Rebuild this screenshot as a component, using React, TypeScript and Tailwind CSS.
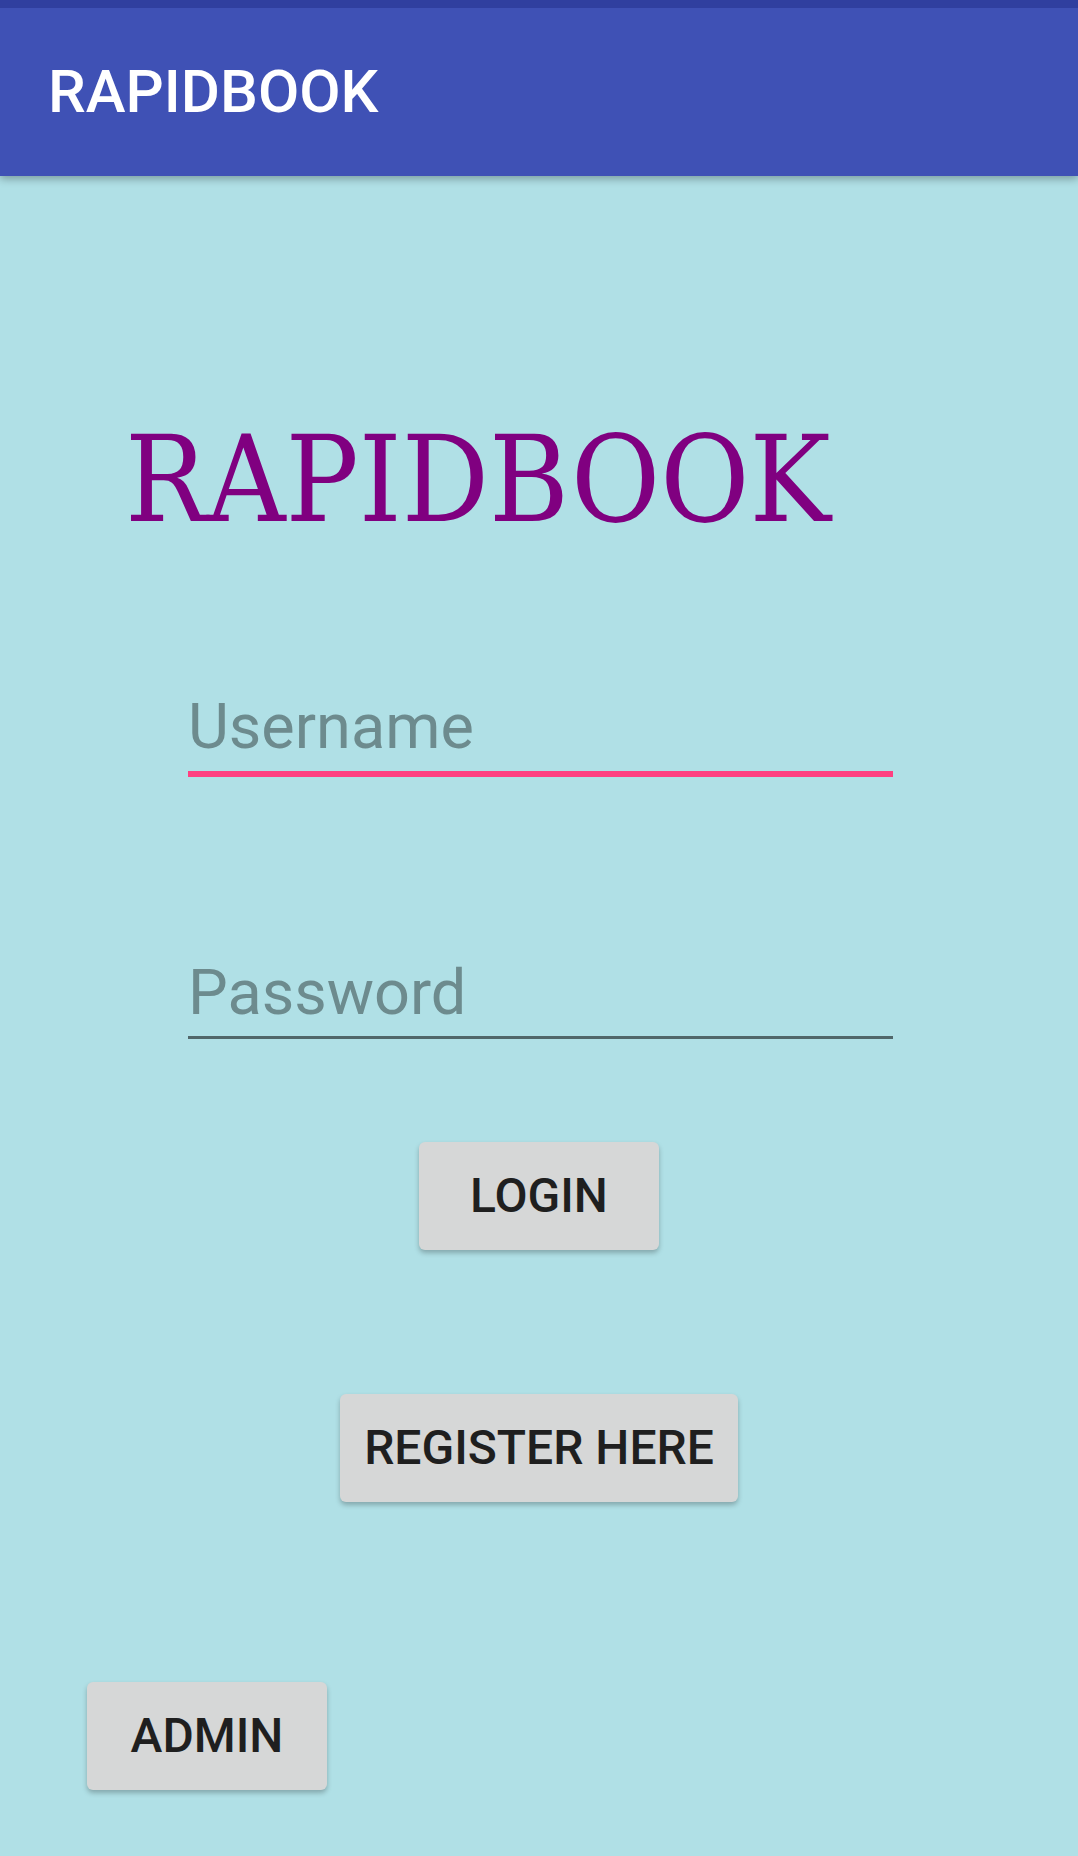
import { useState } from "react";

export default function App() {
  const [username, setUsername] = useState("");
  const [password, setPassword] = useState("");

  return (
    <div className="min-h-[1856px] w-full bg-[#b0e0e6] flex flex-col font-['Roboto',sans-serif]">
      {/* barra de estado + toolbar */}
      <div className="relative z-10 shadow-[0_3px_8px_rgba(0,0,0,0.3)]">
        <div className="h-[8px] bg-[#303f9f]" />
        <div className="h-[168px] bg-[#3f51b5] flex items-center pl-[48px]">
          <span className="text-white text-[60px] font-medium leading-none">RAPIDBOOK</span>
        </div>
      </div>

      {/* Titulo grande */}
      <div className="mt-[244px] pl-[125px]">
        <h1 className="inline-block origin-left scale-x-[0.907] font-['DejaVu_Serif',serif] text-[120px] leading-[120px] text-[#800080] font-normal whitespace-nowrap">
          RAPIDBOOK
        </h1>
      </div>

      {/* Campos */}
      <div className="mt-[155px] pl-[188px] flex flex-col">
        <input
          type="text"
          value={username}
          onChange={(e) => setUsername(e.target.value)}
          placeholder="Username"
          className="w-[705px] h-[82px] pb-[13px] bg-transparent border-b-[6px] border-[#ff4081] outline-none text-[63px] leading-[63px] text-[#212121] placeholder:text-[#6d8b8e]"
        />
        <input
          type="password"
          value={password}
          onChange={(e) => setPassword(e.target.value)}
          placeholder="Password"
          className="mt-[184px] w-[705px] h-[78px] pb-[12px] bg-transparent border-b-[3px] border-[#51676a] outline-none text-[63px] leading-[63px] text-[#212121] placeholder:text-[#6d8b8e]"
        />
      </div>

      {/* Botones */}
      <div className="mt-[103px] flex flex-col items-center">
        <button className="min-w-[240px] h-[108px] px-[24px] rounded-[6px] bg-[#d6d7d7] text-[#1f1f1f] text-[48px] font-medium shadow-[0_3px_5px_rgba(0,0,0,0.25)]">
          LOGIN
        </button>
        <button className="mt-[144px] min-w-[240px] h-[108px] px-[24px] rounded-[6px] bg-[#d6d7d7] text-[#1f1f1f] text-[48px] font-medium shadow-[0_3px_5px_rgba(0,0,0,0.25)]">
          REGISTER HERE
        </button>
      </div>

      <div className="mt-[180px] pl-[87px]">
        <button className="min-w-[240px] h-[108px] px-[24px] rounded-[6px] bg-[#d6d7d7] text-[#1f1f1f] text-[48px] font-medium shadow-[0_3px_5px_rgba(0,0,0,0.25)]">
          ADMIN
        </button>
      </div>
    </div>
  );
}
